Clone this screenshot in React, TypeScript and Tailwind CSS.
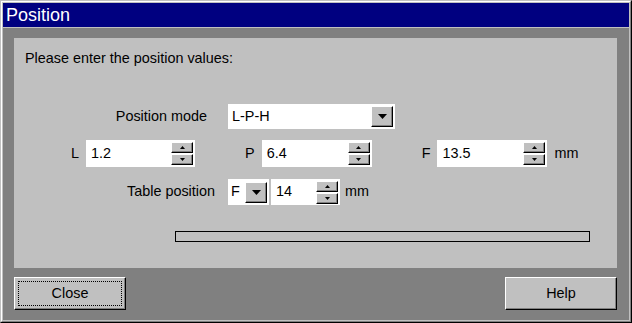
import React from "react";

const font = "font-['Liberation_Sans',Arial,sans-serif]";

function Bevel({ className = "", children }: { className?: string; children?: React.ReactNode }) {
    return (
        <div
            className={`flex items-center justify-center bg-[#c0c0c0] border-t border-l border-white border-r border-b border-r-black border-b-black shadow-[inset_-1px_-1px_0_#808080] ${className}`}
        >
            {children}
        </div>
    );
}

function Spinner() {
    return (
        <div className="flex flex-col gap-[1px]">
            <Bevel className="w-[22px] h-[11px]">
                <svg width="5" height="3" viewBox="0 0 5 3">
                    <polygon points="2.5,0 5,3 0,3" fill="black" />
                </svg>
            </Bevel>
            <Bevel className="w-[22px] h-[11px]">
                <svg width="5" height="3" viewBox="0 0 5 3">
                    <polygon points="0,0 5,0 2.5,3" fill="black" />
                </svg>
            </Bevel>
        </div>
    );
}

function DropArrow({ className = "" }: { className?: string }) {
    return (
        <Bevel className={className}>
            <svg width="9" height="5" viewBox="0 0 9 5">
                <polygon points="0,0 9,0 4.5,5" fill="black" />
            </svg>
        </Bevel>
    );
}

function SpinField({ value, width }: { value: string; width: string }) {
    return (
        <div className={`flex items-center justify-between bg-white h-[27px] pl-[5px] pr-[2px] ${width}`}>
            <span>{value}</span>
            <Spinner />
        </div>
    );
}

export default function App() {
    return (
        <div className={`w-[632px] h-[323px] bg-[#c0c0c0] border-t border-l border-[#c0c0c0] border-r border-b border-r-black border-b-black text-[14.4px] text-black ${font}`}>
            <div className="h-full border-t border-l border-white border-r border-b border-r-[#808080] border-b-[#808080] p-[1px] flex flex-col">
                <div className="h-[24px] bg-[#000080] text-white text-[18px] leading-[24px] pl-[3px]">Position</div>
                <div className="mt-[1px] flex-1 bg-[#808080] pt-[10px] pl-[11px]">
                    <div className="w-[603px] h-[230px] bg-[#c0c0c0] pt-[12px] flex flex-col">
                        <div className="pl-[11px] leading-[16px]">Please enter the position values:</div>

                        <div className="mt-[38px] flex items-center h-[25px]">
                            <span className="w-[193px] text-right">Position mode</span>
                            <div className="ml-[21px] w-[167px] h-[25px] bg-white flex items-center justify-between pl-[4px] pr-[2px]">
                                <span>L-P-H</span>
                                <DropArrow className="w-[22px] h-[21px]" />
                            </div>
                        </div>

                        <div className="mt-[11px] flex items-center pl-[57px]">
                            <span>L</span>
                            <div className="ml-[7px]">
                                <SpinField value="1.2" width="w-[109px]" />
                            </div>
                            <span className="ml-[50px]">P</span>
                            <div className="ml-[7px]">
                                <SpinField value="6.4" width="w-[110px]" />
                            </div>
                            <span className="ml-[50px]">F</span>
                            <div className="ml-[7px]">
                                <SpinField value="13.5" width="w-[110px]" />
                            </div>
                            <span className="ml-[7px]">mm</span>
                        </div>

                        <div className="mt-[12px] flex items-center">
                            <span className="w-[201px] text-right">Table position</span>
                            <div className="ml-[13px] w-[41px] h-[26px] bg-white flex items-center justify-between pl-[3px] pr-[2px]">
                                <span>F</span>
                                <DropArrow className="w-[22px] h-[21px]" />
                            </div>
                            <div className="ml-[2px]">
                                <div className="flex items-center justify-between bg-white h-[26px] pl-[5px] pr-[2px] w-[69px]">
                                    <span>14</span>
                                    <Spinner />
                                </div>
                            </div>
                            <span className="ml-[5px]">mm</span>
                        </div>

                        <div className="mt-[26px] ml-[161px] w-[415px] h-[11px] border border-black bg-[#c0c0c0]" />
                    </div>

                    <div className="mt-[9px] w-[603px] flex justify-between">
                        <Bevel className="relative w-[112px] h-[33px]">
                            <div className="absolute inset-[3px] border border-dotted border-black" />
                            <span>Close</span>
                        </Bevel>
                        <Bevel className="w-[112px] h-[33px]">
                            <span>Help</span>
                        </Bevel>
                    </div>
                </div>
            </div>
        </div>
    );
}
